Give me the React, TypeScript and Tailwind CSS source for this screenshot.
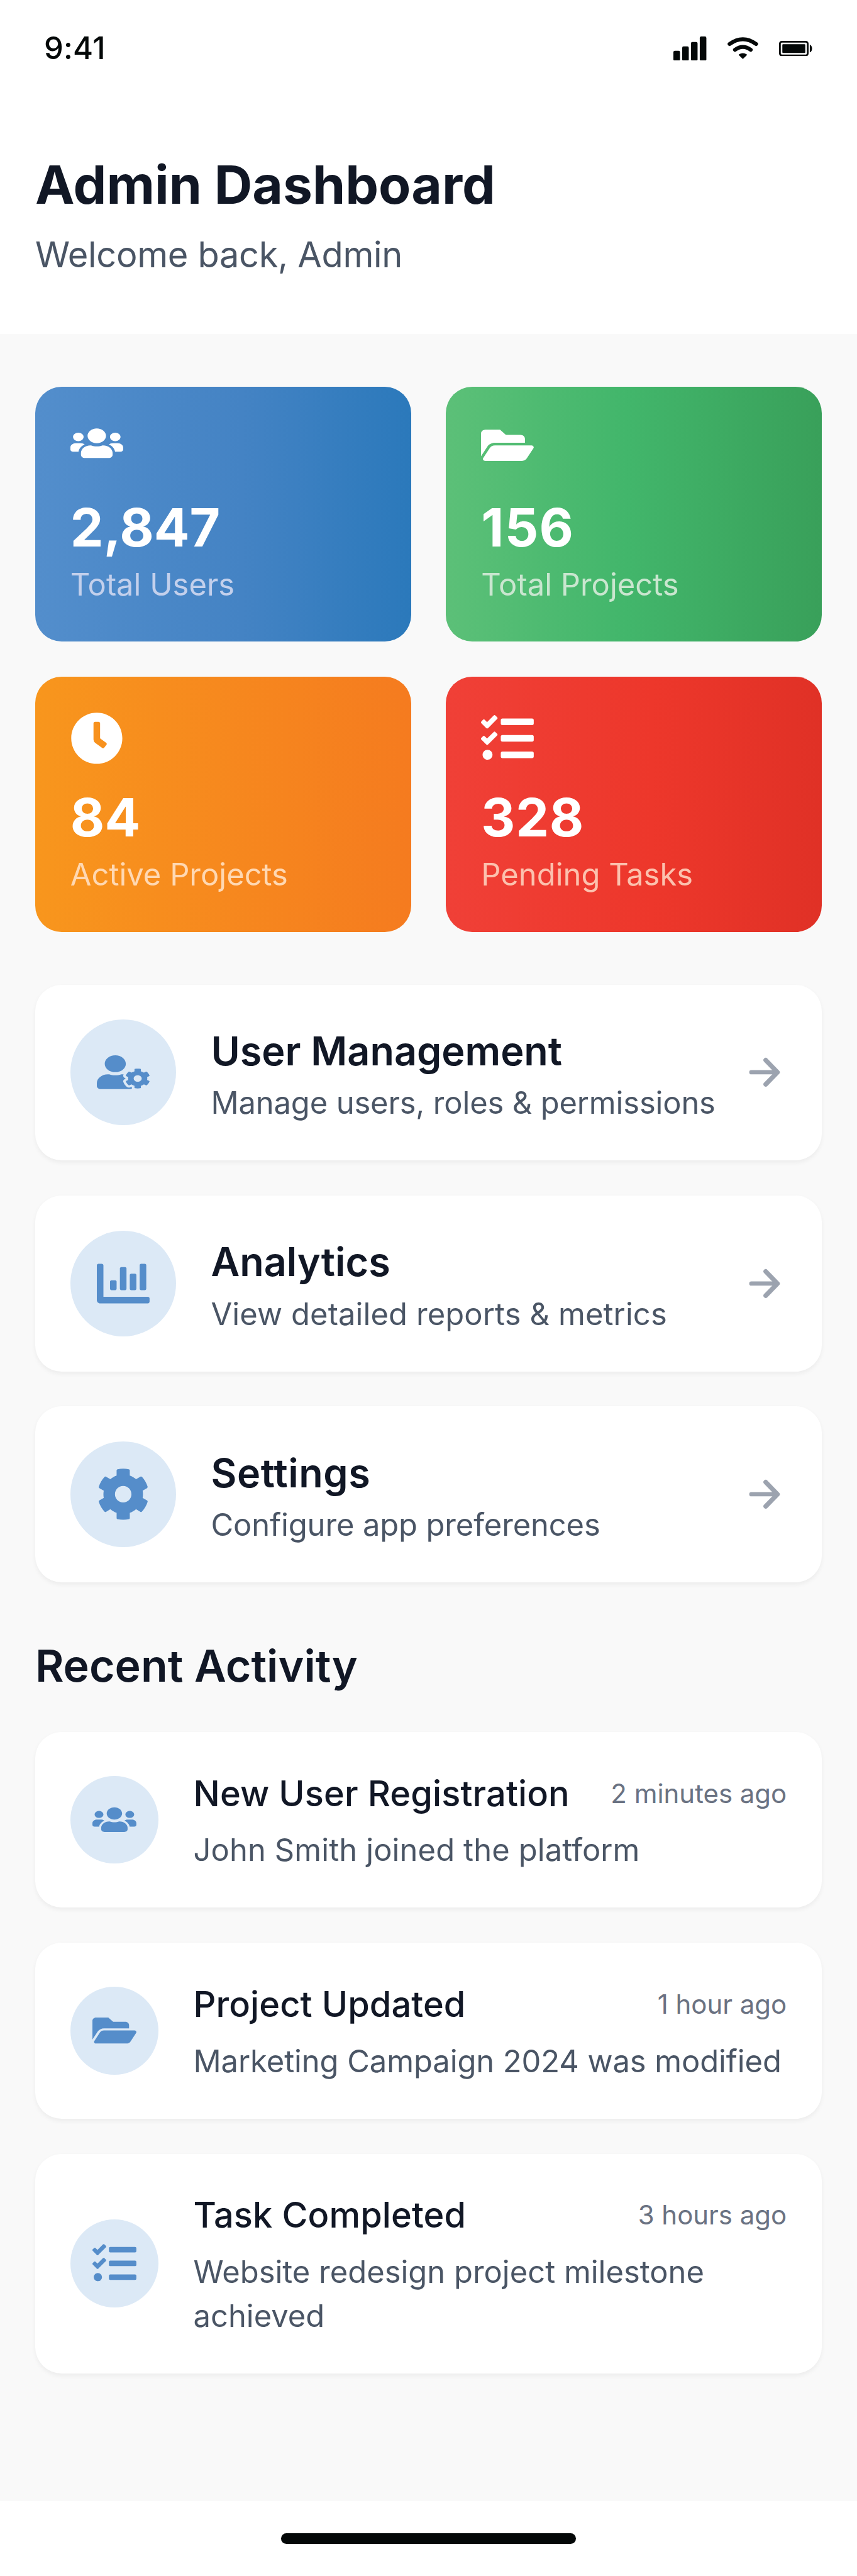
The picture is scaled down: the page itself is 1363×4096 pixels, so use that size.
import { FaUsers, FaFolderOpen, FaClock, FaTasks, FaUserCog, FaChartBar, FaCog } from "react-icons/fa";
import type { IconType } from "react-icons";

type Shape = { icon: IconType; large: string; small: string };

const users: Shape = { icon: FaUsers, large: "w-6 h-[15.36px] mt-[1.92px]", small: "w-5 h-[12.8px]" };
const folder: Shape = { icon: FaFolderOpen, large: "w-6 h-[18.96px] mt-[1.19px]", small: "w-5 h-[15.8px]" };
const clock: Shape = { icon: FaClock, large: "w-6 h-6", small: "w-5 h-5" };
const tasks: Shape = { icon: FaTasks, large: "w-6 h-6", small: "w-5 h-5" };

const stats = [
  { shape: users, value: "2,847", label: "Total Users", bg: "bg-[linear-gradient(90deg,#538ecc,#4483c4_55%,#2b79bb)]", text: "text-[#c3d0ec]", tracking: "tracking-normal" },
  { shape: folder, value: "156", label: "Total Projects", bg: "bg-[linear-gradient(90deg,#5cc078,#42b66b_48%,#39a05a)]", text: "text-[#c9e6cf]", tracking: "tracking-[0.35px]" },
  { shape: clock, value: "84", label: "Active Projects", bg: "bg-[linear-gradient(90deg,#f8961d,#f57b1f)]", text: "text-[#ffd8b2]", tracking: "tracking-normal" },
  { shape: tasks, value: "328", label: "Pending Tasks", bg: "bg-[linear-gradient(90deg,#f04037,#ed372b_55%,#e03126)]", text: "text-[#fcc1ae]", tracking: "tracking-[0.2px]" },
];

const menu = [
  { Icon: FaUserCog, size: "w-6 h-[15.36px]", title: "User Management", titleTracking: "tracking-normal", text: "Manage users, roles & permissions", tracking: "tracking-[-0.045px]" },
  { Icon: FaChartBar, size: "w-6 h-6", title: "Analytics", titleTracking: "tracking-normal", text: "View detailed reports & metrics", tracking: "tracking-[0.03px]" },
  { Icon: FaCog, size: "w-6 h-6", title: "Settings", titleTracking: "tracking-[0.16px]", text: "Configure app preferences", tracking: "tracking-[-0.035px]" },
];

const activity = [
  { shape: users, title: "New User Registration", time: "2 minutes ago", text: "John Smith joined the platform", tracking: "tracking-[0.03px]" },
  { shape: folder, title: "Project Updated", time: "1 hour ago", text: "Marketing Campaign 2024 was modified", tracking: "tracking-[-0.025px]" },
  { shape: tasks, title: "Task Completed", time: "3 hours ago", text: "Website redesign project milestone achieved", tracking: "tracking-normal" },
];

function StatusBar() {
  return (
    <div className="flex h-11 items-center justify-between pl-5 pr-[20.4px] text-[#040808]">
      <span className="text-sm font-medium tracking-[0.08px]">9:41</span>
      <div className="flex items-center gap-[9.5px]">
        <svg className="h-[11px] w-[15px]" viewBox="0 0 60 44" fill="currentColor">
          <rect x="0" y="26" width="12" height="18" rx="2.5" />
          <rect x="16" y="18" width="12" height="26" rx="2.5" />
          <rect x="32" y="10" width="12" height="34" rx="2.5" />
          <rect x="48" y="0" width="12" height="44" rx="2.5" />
        </svg>
        <svg className="h-[10.25px] w-[14px]" viewBox="0 0 56 41" fill="none" stroke="currentColor" strokeLinecap="round">
          <path d="M3.8 12.6 Q28 -5 52.2 12.6" strokeWidth="7" />
          <path d="M13.6 23.2 Q28 12.4 42.4 23.2" strokeWidth="7" />
          <path d="M21.5 32.2 Q28 28 34.5 32.2 L28 38.6 Z" fill="currentColor" strokeWidth="2" strokeLinejoin="round" />
        </svg>
        <svg className="h-[7px] w-[15.1px]" viewBox="0 0 60.4 28" fill="currentColor">
          <rect x="1.6" y="1.6" width="50.6" height="24.8" rx="3.4" fill="none" stroke="currentColor" strokeWidth="3.2" />
          <rect x="6" y="6" width="41.8" height="16" rx="1.5" />
          <path d="M56 7 C61.5 9 61.5 19 56 21 Z" />
        </svg>
      </div>
    </div>
  );
}

export default function App() {
  return (
    <div className="flex h-[1172px] w-[390px] flex-col overflow-hidden bg-white font-['Inter',sans-serif] text-[#111725] [zoom:3.49488]">
      <StatusBar />
      <header className="px-4 py-6">
        <h1 className="text-2xl font-bold">Admin Dashboard</h1>
        <p className="mt-1 text-base tracking-[-0.09px] text-gray-600">Welcome back, Admin</p>
      </header>

      <main className="flex flex-1 flex-col gap-6 bg-[#f9f9f9] px-4 pt-6">
        <section className="grid grid-cols-2 gap-4">
          {stats.map(({ shape, value, label, bg, text, tracking }) => (
            <div key={label} className={`rounded-xl p-4 ${bg}`}>
              <div className="mb-2 flex h-6 items-start">
                <shape.icon preserveAspectRatio="none" className={`text-white ${shape.large}`} />
              </div>
              <div className={`text-2xl font-bold text-white ${tracking}`}>{value}</div>
              <div className={`text-sm ${text}`}>{label}</div>
            </div>
          ))}
        </section>

        <section className="flex flex-col gap-4">
          {menu.map(({ Icon, size, title, titleTracking, text, tracking }) => (
            <div key={title} className="flex items-center gap-4 rounded-xl bg-white p-4 shadow-[0_1px_2px_rgba(0,0,0,0.05)]">
              <div className="flex size-12 shrink-0 items-center justify-center rounded-full bg-[#dce9f6]">
                <Icon preserveAspectRatio="none" className={`text-[#558dca] ${size}`} />
              </div>
              <div className="min-w-0 flex-1">
                <h2 className={`h-7 pt-[0.4px] text-lg leading-7 font-semibold ${titleTracking}`}>{title}</h2>
                <p className={`text-sm whitespace-nowrap text-gray-600 ${tracking}`}>{text}</p>
              </div>
              <svg className="size-5 shrink-0" viewBox="0 0 20 20" fill="none" stroke="#9ca3af" strokeWidth="2.1" strokeLinecap="round" strokeLinejoin="round">
                <path d="M4 10h11.5" strokeWidth="1.95" />
                <path d="M10.55 4.5l5.35 5.5-5.35 5.5" />
              </svg>
            </div>
          ))}
        </section>

        <section>
          <h2 className="mb-4 text-xl font-semibold">Recent Activity</h2>
          <div className="flex flex-col gap-4">
            {activity.map(({ shape, title, time, text, tracking }) => (
              <div key={title} className="flex items-center gap-4 rounded-xl bg-white p-4 shadow-[0_1px_2px_rgba(0,0,0,0.05)]">
                <div className="flex size-10 shrink-0 items-center justify-center rounded-full bg-[#dce9f6]">
                  <shape.icon preserveAspectRatio="none" className={`text-[#558dca] ${shape.small}`} />
                </div>
                <div className="min-w-0 flex-1">
                  <div className="mb-1 flex h-6 items-center justify-between">
                    <h3 className="text-base font-medium tracking-[0.03px]">{title}</h3>
                    <span className="text-xs text-gray-500">{time}</span>
                  </div>
                  <p className={`text-sm text-gray-600 ${tracking}`}>{text}</p>
                </div>
              </div>
            ))}
          </div>
        </section>
      </main>

      <footer className="flex h-[34px] items-start justify-center bg-white pt-[14.5px]">
        <div className="h-[5px] w-[134px] rounded-full bg-[#040808]" />
      </footer>
    </div>
  );
}
